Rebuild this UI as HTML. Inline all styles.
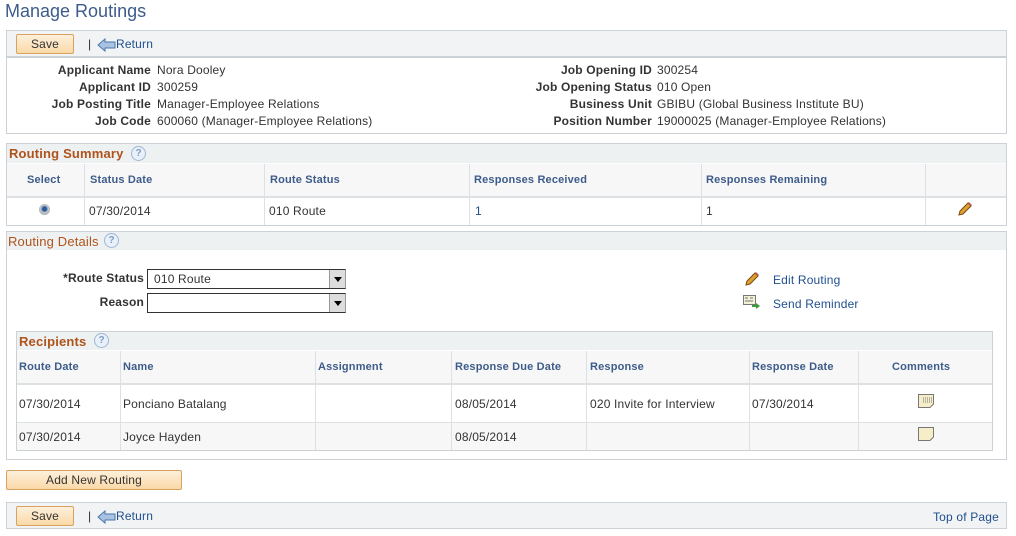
<!DOCTYPE html>
<html><head><style>
*{box-sizing:border-box;margin:0;padding:0}
body{width:1016px;height:536px;background:#fff;font-family:"Liberation Sans",Arial,sans-serif;font-size:12px;color:#333;position:relative;overflow:hidden;letter-spacing:0.17px}
.a{position:absolute;white-space:nowrap}
.box{position:absolute;border:1px solid #cbd1d5;background:#fff}
.bar{position:absolute;background:#eef1f2}
.btn{position:absolute;border:1px solid #d9a25e;border-radius:2px;background:linear-gradient(#fdf0dc,#fbd9a8);text-align:center;color:#333;font-size:12px}
.lbl{font-weight:bold;color:#333;text-align:right}
.lnk{color:#1f4f8f}
.th{position:absolute;color:#3d5c8a;font-weight:bold;font-size:11px}
.vl{position:absolute;width:1px;background:#dde1e3}
.hl{position:absolute;height:1px;background:#dde1e3}
.help{position:absolute;width:15px;height:15px;border-radius:50%;border:1px solid #9fb6d2;background:#e8f0fa;color:#7f9cc4;font-size:10px;font-weight:bold;text-align:center;line-height:13px;letter-spacing:0}
.sec{color:#b0531b;font-size:13px}
.sel{position:absolute;border:1px solid #333;border-right:1px solid #999;background:#fff;height:20px;font-size:12px;padding:2px 6px}
.sel i{position:absolute;right:0;top:0;width:16px;height:18px;background:#ddd;border-left:1px solid #999}
.sel i:after{content:"";position:absolute;left:4px;top:7px;border:4px solid transparent;border-top:5px solid #000}
</style></head><body>
<div class="a" style="left:5px;top:1px;font-size:18px;color:#3d5c8a;letter-spacing:0">Manage Routings</div>

<div class="box" style="left:6px;top:30px;width:1001px;height:27px;background:#f1f3f4"></div>
<div class="btn" style="left:16px;top:34px;width:58px;height:20px;line-height:18px">Save</div>
<div class="a" style="left:88px;top:37px;color:#333">|</div>
<svg class="a" style="left:97px;top:38px" width="20" height="14" viewBox="0 0 20 14"><path d="M1 7 L8 1 V4 H18 V10 H8 V13 Z" fill="#a9c4e2" stroke="#4a76a8" stroke-width="1"/></svg>
<div class="a lnk" style="left:116px;top:37px">Return</div>

<div class="box" style="left:6px;top:57px;width:1001px;height:77px"></div>
<div class="a lbl" style="right:865px;top:63px">Applicant Name</div><div class="a" style="left:157px;top:63px">Nora Dooley</div>
<div class="a lbl" style="right:865px;top:80px">Applicant ID</div><div class="a" style="left:157px;top:80px">300259</div>
<div class="a lbl" style="right:865px;top:97px">Job Posting Title</div><div class="a" style="left:157px;top:97px">Manager-Employee Relations</div>
<div class="a lbl" style="right:865px;top:114px">Job Code</div><div class="a" style="left:157px;top:114px">600060 (Manager-Employee Relations)</div>
<div class="a lbl" style="right:364px;top:63px">Job Opening ID</div><div class="a" style="left:657px;top:63px">300254</div>
<div class="a lbl" style="right:364px;top:80px">Job Opening Status</div><div class="a" style="left:657px;top:80px">010 Open</div>
<div class="a lbl" style="right:364px;top:97px">Business Unit</div><div class="a" style="left:657px;top:97px">GBIBU (Global Business Institute BU)</div>
<div class="a lbl" style="right:364px;top:114px">Position Number</div><div class="a" style="left:657px;top:114px">19000025 (Manager-Employee Relations)</div>

<div class="box" style="left:6px;top:143px;width:1001px;height:83px"></div>
<div class="bar" style="left:7px;top:144px;width:999px;height:19px"></div>
<div class="a sec" style="left:9px;top:146px;font-weight:bold">Routing Summary</div>
<div class="help" style="left:131px;top:146px">?</div>
<div class="a" style="left:7px;top:164px;width:999px;height:33px;background:#f7f7f7"></div>
<div class="hl" style="left:7px;top:196px;width:999px;height:2px"></div>
<div class="vl" style="left:84px;top:164px;height:61px"></div>
<div class="vl" style="left:264px;top:164px;height:61px"></div>
<div class="vl" style="left:469px;top:164px;height:61px"></div>
<div class="vl" style="left:701px;top:164px;height:61px"></div>
<div class="vl" style="left:925px;top:164px;height:61px"></div>
<div class="th" style="left:27px;top:174px">Select</div>
<div class="th" style="left:90px;top:174px">Status Date</div>
<div class="th" style="left:270px;top:174px">Route Status</div>
<div class="th" style="left:474px;top:174px">Responses Received</div>
<div class="th" style="left:706px;top:174px">Responses Remaining</div>
<div class="a" style="left:39px;top:204px;width:11px;height:11px;border-radius:50%;background:radial-gradient(circle at 50% 45%,#2a5b9a 0,#2a5b9a 25%,#c8ccd0 45%,#888 100%)"></div>
<div class="a" style="left:89px;top:204px">07/30/2014</div>
<div class="a" style="left:269px;top:204px">010 Route</div>
<div class="a lnk" style="left:475px;top:204px">1</div>
<div class="a" style="left:706px;top:204px">1</div>
<svg class="a" style="left:957px;top:201px" width="16" height="16" viewBox="0 0 16 16"><path d="M2 14 L3 10 L11 2 L14 5 L6 13 Z" fill="#e0a030" stroke="#7a4a10" stroke-width="1"/><path d="M11 2 L14 5 L15 4 L12 1 Z" fill="#c06060"/></svg>

<div class="box" style="left:6px;top:231px;width:1001px;height:229px"></div>
<div class="bar" style="left:7px;top:232px;width:999px;height:18px"></div>
<div class="a sec" style="left:8px;top:234px">Routing Details</div>
<div class="help" style="left:104px;top:233px">?</div>
<div class="a lbl" style="right:872px;top:271px">*Route Status</div>
<div class="sel" style="left:147px;top:269px;width:199px">010 Route<i></i></div>
<div class="a lbl" style="right:872px;top:295px">Reason</div>
<div class="sel" style="left:147px;top:293px;width:199px"><i></i></div>
<svg class="a" style="left:744px;top:271px" width="16" height="16" viewBox="0 0 16 16"><path d="M2 14 L3 10 L11 2 L14 5 L6 13 Z" fill="#e0a030" stroke="#7a4a10" stroke-width="1"/><path d="M11 2 L14 5 L15 4 L12 1 Z" fill="#c06060"/></svg>
<div class="a lnk" style="left:773px;top:273px">Edit Routing</div>
<svg class="a" style="left:743px;top:295px" width="18" height="14" viewBox="0 0 18 14"><rect x="0.5" y="0.5" width="12" height="9" fill="#f3f0d8" stroke="#777"/><path d="M2 3h3M7 3h3M2 6h8" stroke="#777"/><path d="M9 10h4V8l4 3-4 3v-2H9z" fill="#3a9a3a"/></svg>
<div class="a lnk" style="left:773px;top:297px">Send Reminder</div>

<div class="box" style="left:16px;top:331px;width:977px;height:120px"></div>
<div class="bar" style="left:17px;top:332px;width:975px;height:18px"></div>
<div class="a sec" style="left:19px;top:334px;font-weight:bold">Recipients</div>
<div class="help" style="left:94px;top:333px">?</div>
<div class="a" style="left:17px;top:351px;width:975px;height:33px;background:#f7f7f7"></div>
<div class="hl" style="left:17px;top:383px;width:975px;height:2px"></div>
<div class="hl" style="left:17px;top:422px;width:975px"></div>
<div class="a" style="left:17px;top:423px;width:975px;height:27px;background:#f7f7f7"></div>
<div class="vl" style="left:120px;top:351px;height:99px"></div>
<div class="vl" style="left:315px;top:351px;height:99px"></div>
<div class="vl" style="left:451px;top:351px;height:99px"></div>
<div class="vl" style="left:586px;top:351px;height:99px"></div>
<div class="vl" style="left:749px;top:351px;height:99px"></div>
<div class="vl" style="left:858px;top:351px;height:99px"></div>
<div class="th" style="left:19px;top:361px">Route Date</div>
<div class="th" style="left:123px;top:361px">Name</div>
<div class="th" style="left:318px;top:361px">Assignment</div>
<div class="th" style="left:455px;top:361px">Response Due Date</div>
<div class="th" style="left:590px;top:361px">Response</div>
<div class="th" style="left:752px;top:361px">Response Date</div>
<div class="th" style="left:892px;top:361px">Comments</div>
<div class="a" style="left:19px;top:397px">07/30/2014</div>
<div class="a" style="left:123px;top:397px">Ponciano Batalang</div>
<div class="a" style="left:455px;top:397px">08/05/2014</div>
<div class="a" style="left:590px;top:397px">020 Invite for Interview</div>
<div class="a" style="left:752px;top:397px">07/30/2014</div>
<svg class="a" style="left:918px;top:394px" width="16" height="14" viewBox="0 0 16 14"><path d="M0.5 0.5H15.5V10L12 13.5H0.5Z" fill="#f6eec8" stroke="#777"/><path d="M5 4h9M5 6h9M5 8h9" stroke="#777" stroke-dasharray="1 1"/></svg>
<div class="a" style="left:19px;top:430px">07/30/2014</div>
<div class="a" style="left:123px;top:430px">Joyce Hayden</div>
<div class="a" style="left:455px;top:430px">08/05/2014</div>
<svg class="a" style="left:918px;top:427px" width="16" height="14" viewBox="0 0 16 14"><path d="M0.5 0.5H15.5V10L12 13.5H0.5Z" fill="#f6eec8" stroke="#777"/></svg>

<div class="btn" style="left:6px;top:470px;width:176px;height:20px;line-height:18px">Add New Routing</div>

<div class="box" style="left:6px;top:502px;width:1001px;height:27px;background:#f1f3f4"></div>
<div class="btn" style="left:16px;top:506px;width:58px;height:20px;line-height:18px">Save</div>
<div class="a" style="left:88px;top:509px;color:#333">|</div>
<svg class="a" style="left:97px;top:510px" width="20" height="14" viewBox="0 0 20 14"><path d="M1 7 L8 1 V4 H18 V10 H8 V13 Z" fill="#a9c4e2" stroke="#4a76a8" stroke-width="1"/></svg>
<div class="a lnk" style="left:116px;top:509px">Return</div>
<div class="a lnk" style="left:933px;top:510px">Top of Page</div>
</body></html>
